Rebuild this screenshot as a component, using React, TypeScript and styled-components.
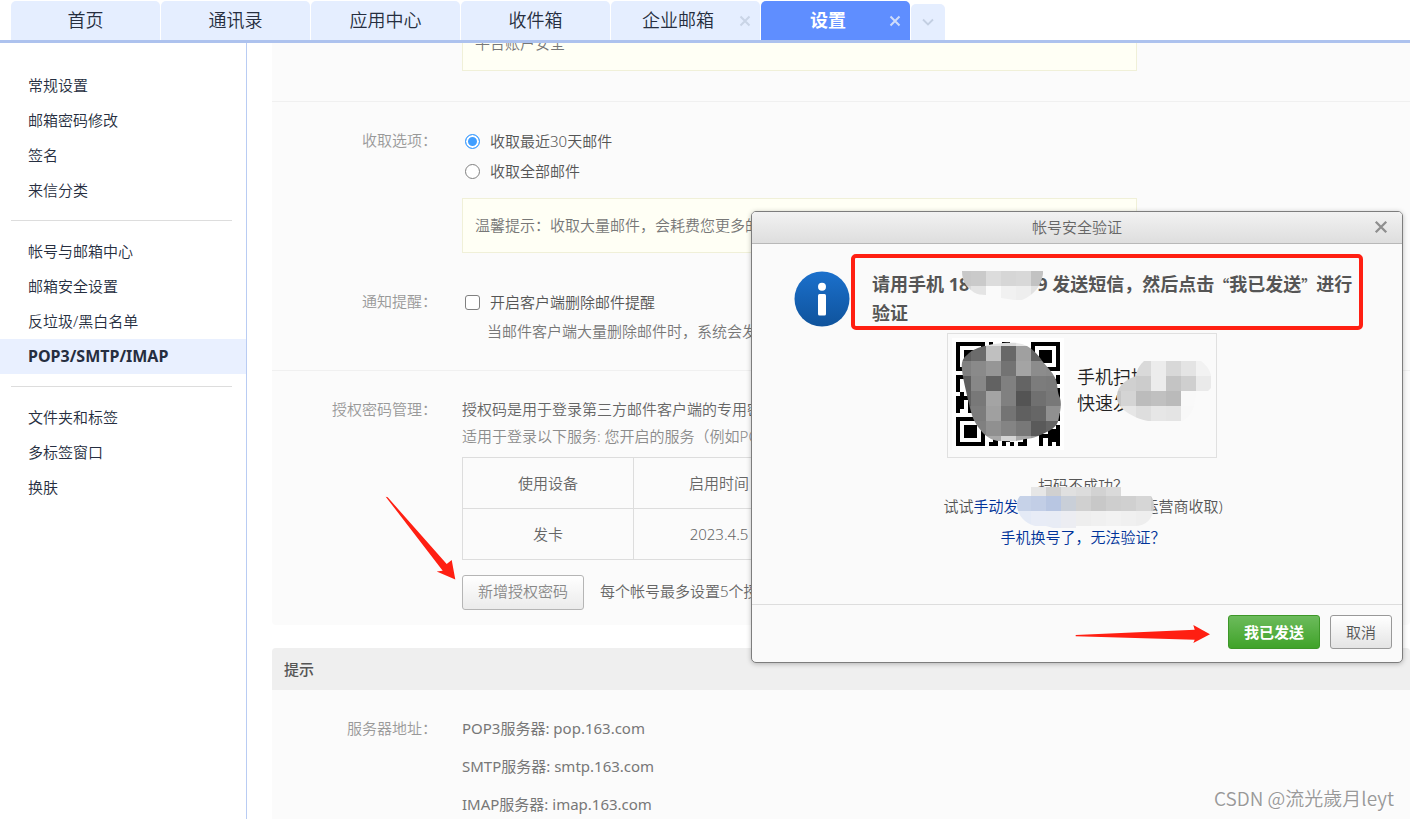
import React from "react";
import styled, { createGlobalStyle, css } from "styled-components";

const cjk = `"Noto Sans CJK SC", sans-serif`;
const sans = `"Noto Sans", ${cjk}`;

const GlobalStyle = createGlobalStyle`
  * { box-sizing: border-box; }
  body {
    margin: 0;
    background: #fff;
    color: #555;
    font-family: ${sans};
    font-size: 15px;
    font-weight: 350;
    line-height: 30px;
  }
  button, input { font: inherit; margin: 0; }
  a { text-decoration: none; color: #003399; }
  p, h1, h2 { margin: 0; font-weight: inherit; font-size: inherit; }
`;

const Page = styled.div`
  position: relative;
  display: flex;
  flex-direction: column;
  height: 100vh;
  overflow: hidden;
`;

/* ---------- top tabs ---------- */

const TabBar = styled.nav`
  display: flex;
  align-items: flex-end;
  gap: 1px;
  flex: none;
  padding: 1px 11px 0;
  border-bottom: 3px solid #adc2ee;
`;

const Tab = styled.div<{ $active?: boolean; $closable?: boolean }>`
  display: flex;
  align-items: center;
  width: 149px;
  height: 39px;
  padding: ${(p) => (p.$closable ? "0 9px 0 6px" : "0")};
  border-radius: 5px 5px 0 0;
  background: ${(p) => (p.$active ? "#5f8eff" : "#e5eeff")};
  color: ${(p) => (p.$active ? "#fff" : "#262e40")};
  font-weight: ${(p) => (p.$active ? 700 : "inherit")};
`;

const TabLink = styled.button`
  flex: 1;
  border: 0;
  padding: 0 0 2px;
  background: none;
  color: inherit;
  font-size: 18px;
`;

const CloseButton = styled.button<{ $color: string }>`
  display: flex;
  border: 0;
  padding: 0;
  background: none;
  color: ${(p) => p.$color};
`;

const MoreTabs = styled.button`
  display: flex;
  align-items: center;
  justify-content: center;
  width: 34px;
  height: 36px;
  border: 0;
  padding: 0;
  border-radius: 5px 5px 0 0;
  background: #e5eeff;
  color: #c3cfe2;
`;

/* ---------- sidebar ---------- */

const Body = styled.div`
  display: flex;
  flex: 1;
  min-height: 0;
`;

const Sidebar = styled.aside`
  flex: none;
  width: 247px;
  padding-top: 25px;
  border-right: 1px solid #b9ccf3;
`;

const MenuGroup = styled.ul`
  margin: 0;
  padding: 0;
  list-style: none;
`;

const Divider = styled.hr`
  height: 1px;
  margin: 12px 14px 13px 11px;
  border: 0;
  background: #ddd;
`;

const MenuLink = styled.a<{ $active?: boolean }>`
  display: block;
  padding-left: 28px;
  line-height: 35px;
  color: #262e40;
  ${(p) =>
    p.$active &&
    css`
      background: #e9f0ff;
      font-size: 16px;
      font-weight: 700;
    `}
`;

/* ---------- settings ---------- */

const Main = styled.main`
  flex: 1;
  min-width: 0;
  overflow: hidden;
  padding-left: 25px;
`;

const Panel = styled.section<{ $scrolled?: boolean }>`
  margin-top: ${(p) => (p.$scrolled ? -27 : 23)}px;
  border-radius: 4px;
  overflow: hidden;
  background: #fbfbfb;
`;

const PanelTitle = styled.h2`
  padding-left: 12px;
  line-height: 42px;
  background: #efefef;
  font-weight: 500;
`;

const Row = styled.div<{ $top: number; $bottom: number; $line?: boolean }>`
  display: grid;
  grid-template-columns: 165px minmax(0, 675px);
  column-gap: 25px;
  padding: ${(p) => p.$top}px 0 ${(p) => p.$bottom}px;
  border-bottom: ${(p) => (p.$line ? "1px solid #f0f0f0" : "0")};
`;

const RowLabel = styled.div<{ $leading?: number }>`
  text-align: right;
  line-height: ${(p) => p.$leading ?? 28}px;
  color: #999;
`;

const Note = styled.div<{ $gap?: number }>`
  margin-top: ${(p) => p.$gap ?? 0}px;
  padding: 15px 12px;
  border: 1px solid #f0f0d8;
  background: #fffff5;
  line-height: 23px;
  color: #777;
`;

const Choice = styled.label`
  display: flex;
  align-items: center;
  gap: 10px;
  padding-left: 3px;
`;

const Tick = styled.input`
  appearance: none;
  width: 15px;
  height: 15px;
  border: 1px solid #808080;
  border-radius: ${(p) => (p.type === "radio" ? "50%" : "3px")};
  background: #fff;
  &[type="radio"]:checked {
    border-color: #409eff;
    background: #409eff;
    box-shadow: inset 0 0 0 2px #fff;
  }
`;

const Hint = styled.p`
  padding-left: 25px;
  line-height: 28px;
  color: #777;
`;

const SubText = styled.p`
  line-height: 26px;
  color: #8c8c8c;
  white-space: nowrap;
`;

const Line = styled.p`
  line-height: 28px;
  color: #666;
  white-space: nowrap;
`;

const ServerLine = styled.p`
  line-height: 38px;
  font-weight: 400;
  color: #777;
`;

const DeviceTable = styled.table`
  margin-top: 8px;
  width: 343px;
  table-layout: fixed;
  border-collapse: collapse;
  color: #666;
  th, td {
    height: 51px;
    padding: 0;
    border: 1px solid #ddd;
    font-weight: inherit;
    text-align: center;
  }
`;

const AddLine = styled.div`
  position: relative;
  display: flex;
  gap: 16px;
  margin-top: 15px;
  line-height: 32px;
  white-space: nowrap;
  color: #666;
`;

const Button = styled.button<{ $kind?: "primary" | "muted" }>`
  height: 34px;
  padding: 0 15px;
  border: 1px solid #999;
  border-radius: 3px;
  background: linear-gradient(#fff, #e4e4e4);
  color: #555;
  line-height: 30px;
  ${(p) =>
    p.$kind === "muted" &&
    css`
      height: 35px;
      padding-bottom: 3px;
      border-color: #b5b5b5;
      background: linear-gradient(#fff, #ebebeb);
      color: #888;
    `}
  ${(p) =>
    p.$kind === "primary" &&
    css`
      border-color: #3d9728;
      background: linear-gradient(#6cbb5c, #40a329);
      color: #fff;
      font-weight: 700;
    `}
`;

/* ---------- dialog ---------- */

const Dialog = styled.div`
  position: absolute;
  top: 211px;
  right: 7px;
  width: 652px;
  border: 1px solid #7d7d7d;
  border-radius: 5px;
  background: #fafafa;
  box-shadow: 0 1px 5px rgba(0, 0, 0, 0.25);
`;

const DialogHeader = styled.header`
  display: flex;
  align-items: center;
  height: 32px;
  padding: 0 14px 2px 28px;
  border-bottom: 1px solid #b8b8b8;
  border-radius: 4px 4px 0 0;
  background: linear-gradient(#f2f2f2, #dedede);
  color: #666;
  h1 { flex: 1; text-align: center; }
`;

const DialogBody = styled.div`
  padding: 26px 42px 56px;
`;

const Message = styled.div`
  display: flex;
  align-items: center;
  gap: 22px;
`;

const MessageText = styled.p`
  flex: 1;
  color: #555;
  font-size: 18px;
  font-weight: 700;
  line-height: 29px;
`;

const Wide = styled.span`
  font-family: ${cjk};
  font-size: 15px;
`;

const Highlight = styled.div`
  position: absolute;
  top: 42px;
  left: 99px;
  width: 512px;
  height: 76px;
  border: 4px solid #ff1f12;
  border-radius: 5px;
`;

const Redacted = styled.span<{ $width: number }>`
  position: relative;
  display: inline-block;
  width: ${(p) => p.$width}px;
  height: 1px;
`;

const Mosaic = styled.svg<{ $left: number; $top: number }>`
  position: absolute;
  z-index: 1;
  left: ${(p) => p.$left}px;
  top: ${(p) => p.$top}px;
`;

const ScanCard = styled.div`
  position: relative;
  display: flex;
  align-items: flex-start;
  gap: 13px;
  width: 270px;
  height: 125px;
  margin: 5px auto 0;
  padding: 4px;
  border: 1px solid #e0e0e0;
`;

const ScanText = styled.p`
  padding-top: 26px;
  font-size: 18px;
  line-height: 26px;
  color: #222;
`;

const Center = styled.div`
  padding-left: 10px;
`;

const Help = styled.div`
  padding: 17px 0 0 2px;
  text-align: center;
  line-height: 21px;
  p + p + p { margin-top: 10px; }
`;

const DialogFooter = styled.footer`
  display: flex;
  justify-content: flex-end;
  gap: 10px;
  padding: 10px 10px 13px;
  border-top: 1px solid #ddd;
`;

const ButtonWrap = styled.div`
  position: relative;
  display: flex;
`;

const Arrow = styled.svg<{ $left: number; $top: number }>`
  position: absolute;
  left: ${(p) => p.$left}px;
  top: ${(p) => p.$top}px;
`;

const Watermark = styled.div`
  position: absolute;
  right: 16px;
  bottom: 6px;
  font-family: ${cjk};
  font-size: 19px;
  color: #999;
  text-shadow: 1px 1px 0 #fff;
`;

/* ---------- drawings ---------- */

const Cross = ({ size, weight }: { size: number; weight: number }) => (
  <svg width={size} height={size} viewBox="0 0 12 12" aria-hidden="true">
    <path d="M1.5 1.5 10.5 10.5M10.5 1.5 1.5 10.5" stroke="currentColor" strokeWidth={weight} fill="none" />
  </svg>
);

type Cell = [x: number, y: number, w: number, h: number, color: string];

const Cells = ({ cells }: { cells: Cell[] }) => (
  <>
    {cells.map(([x, y, w, h, fill], i) => (
      <rect key={i} x={x} y={y} width={w} height={h} fill={fill} />
    ))}
  </>
);

const phoneCells: Cell[] = [
  [0, 0, 9, 15, "#c8c8c8"], [9, 0, 15, 15, "#cacaca"], [24, 0, 15, 15, "#dcdcdc"],
  [39, 0, 15, 15, "#d6d6d6"], [54, 0, 15, 15, "#d8d8d8"], [69, 0, 12, 15, "#c2c2c2"],
  [0, 15, 9, 15, "#d8d8d8"], [9, 15, 15, 15, "#e4e4e4"], [24, 15, 15, 15, "#fafafa"],
  [39, 15, 15, 15, "#f1f1f1"], [54, 15, 15, 15, "#eeeeee"], [69, 15, 12, 15, "#e2e2e2"],
];

const scanCells: Cell[] = [
  [19, 0, 15, 15, "#d9d9d9"], [34, 0, 15, 30, "#ececec"], [49, 0, 15, 15, "#d8d8d8"],
  [64, 0, 15, 15, "#e4e4e4"], [79, 0, 15, 15, "#f2f2f2"], [0, 15, 19, 15, "#d0d0d0"],
  [19, 15, 15, 15, "#cccccc"], [49, 15, 15, 15, "#c4c4c4"], [64, 15, 15, 15, "#cfcfcf"],
  [79, 15, 15, 15, "#eaeaea"], [0, 30, 4, 15, "#c6c6c6"], [4, 30, 15, 15, "#d4d4d4"],
  [19, 30, 15, 15, "#bcbcbc"], [34, 30, 15, 15, "#c0c0c0"], [49, 30, 15, 15, "#bababa"],
  [64, 30, 15, 15, "#f9f9f9"], [0, 45, 19, 15, "#e6e6e6"], [19, 45, 15, 15, "#dedede"],
  [34, 45, 15, 15, "#e6e6e6"], [49, 45, 15, 15, "#e4e4e4"], [64, 45, 15, 15, "#f8f8f8"],
];

const smsCells: Cell[] = [
  [14, 0, 15, 9, "#e6e6e6"], [29, 0, 15, 9, "#d0d0d0"], [44, 0, 15, 9, "#e0e0e0"],
  [59, 0, 15, 9, "#dcdcdc"], [74, 0, 15, 9, "#d2d2d2"], [89, 0, 15, 9, "#dadada"],
  [0, 9, 14, 15, "#c6d2e8"], [14, 9, 15, 15, "#c2cee6"], [29, 9, 15, 15, "#b8c6e2"],
  [44, 9, 15, 15, "#c9cfd8"], [59, 9, 15, 15, "#d0d0d0"], [74, 9, 15, 15, "#c8c8c8"],
  [89, 9, 15, 15, "#cecece"], [104, 9, 15, 15, "#d0d0d0"], [119, 9, 15, 15, "#d6d6d6"],
  [134, 9, 3, 15, "#cccccc"],
  [0, 24, 14, 18, "#e4eaf6"], [14, 24, 15, 18, "#e8ecf6"], [29, 24, 15, 18, "#e8ecf5"],
  [44, 24, 15, 18, "#ecedf2"], [59, 24, 15, 18, "#eeeeee"], [74, 24, 15, 18, "#f0f0f0"],
  [89, 24, 15, 18, "#f2f2f2"], [104, 24, 15, 18, "#f0f0f0"], [119, 24, 18, 18, "#eeeeee"],
];

const qrShades = [
  ["#d8d8d8", "#d8d8d8", "#e4e4e4", "#dcdcdc", "#e8e8e8", "#e0e0e0", "#d8d8d8"],
  ["#5f5f5f", "#6c6c6c", "#c0c0c0", "#686868", "#a0a0a0", "#626262", "#888888"],
  ["#808080", "#8a8a8a", "#969696", "#737373", "#a4a4a4", "#8c8c8c", "#8a8a8a"],
  ["#5e5e5e", "#878787", "#626262", "#808080", "#646464", "#7c7c7c", "#7a7a7a"],
  ["#606060", "#787878", "#a4a4a4", "#808080", "#545454", "#707070", "#787878"],
  ["#707070", "#7c7c7c", "#a0a0a0", "#747474", "#606060", "#666666", "#909090"],
  ["#707070", "#808080", "#909090", "#848484", "#787878", "#5a5a5a", "#646464"],
  ["#a0a0a0", "#a0a0a0", "#a8a8a8", "#d4d4d4", "#a8a8a8", "#989898", "#707070"],
];

const qrModules = [
  "1111111010011000001111111",
  "1000001001001100001000001",
  "1011101010110010101011101",
  "1011101001011010101011101",
  "1011101011010110001011101",
  "1000001010101010101000001",
  "1111111010101010101111111",
  "0000000011001010100000000",
  "1110101011010110110101101",
  "1001010101011010011010011",
  "1000101011010110101100100",
  "1000010101010101101011011",
  "0101101010110101100110111",
  "1110110101101010101010101",
  "1101001010110101011010110",
  "1101101101010110101101001",
  "1001010101011010110100110",
  "0000000010101101100010001",
  "1111111010110101101010111",
  "1000001011010110100010000",
  "1011101001011010111111001",
  "1011101010101101101100111",
  "1011101001110010100011111",
  "1000001001011000100010111",
  "1111111011010101100010101",
];

const QrCode = () => (
  <svg width="112" height="112" viewBox="0 0 112 112" role="img" aria-label="二维码">
    <defs>
      <clipPath id="qr-blob">
        <path d="M10 32C9 24 11 20 15 17C20 11 30 8 42 6C58 4 68 4 75 8C82 12 87 18 91 24C97 31 102 36 104 42C106 48 105 54 108 60C110 66 108 74 107 79C106 87 102 90 97 93C88 97 82 101 73 101C64 104 56 103 46 103C40 102 37 100 32 96C27 90 24 87 21 80C19 74 18 70 16 62C14 52 11 42 10 32Z" />
      </clipPath>
    </defs>
    <rect width="112" height="112" fill="#fff" />
    <g transform="translate(4 4) scale(4.16)" shapeRendering="crispEdges">
      {qrModules.flatMap((row, y) =>
        [...row].map((bit, x) => (bit === "1" ? <rect key={`${x}-${y}`} x={x} y={y} width="1" height="1" /> : null))
      )}
    </g>
    <g clipPath="url(#qr-blob)">
      {qrShades.flatMap((row, y) =>
        row.map((fill, x) => (
          <rect key={`${x}-${y}`} x={4 + x * 15} y={y * 15 - 7} width="15" height="15" fill={fill} />
        ))
      )}
    </g>
  </svg>
);

const InfoIcon = () => (
  <svg width="56" height="56" viewBox="0 0 56 56" aria-hidden="true">
    <defs>
      <linearGradient id="info-fill" x1="0" y1="0" x2="0" y2="1">
        <stop offset="0" stopColor="#1b70cc" />
        <stop offset="1" stopColor="#0f539c" />
      </linearGradient>
    </defs>
    <circle cx="28" cy="28" r="27.5" fill="url(#info-fill)" />
    <circle cx="28" cy="15.7" r="4" fill="#fff" />
    <rect x="24" y="23" width="8" height="21.5" rx="1.5" fill="#fff" />
  </svg>
);

/* ---------- data ---------- */

const tabs = [
  { label: "首页" },
  { label: "通讯录" },
  { label: "应用中心" },
  { label: "收件箱" },
  { label: "企业邮箱", closable: true },
  { label: "设置", closable: true, active: true },
];

const menu = [
  ["常规设置", "邮箱密码修改", "签名", "来信分类"],
  ["帐号与邮箱中心", "邮箱安全设置", "反垃圾/黑白名单", "POP3/SMTP/IMAP"],
  ["文件夹和标签", "多标签窗口", "换肤"],
];

export default function App() {
  return (
    <Page lang="zh-CN">
      <GlobalStyle />
      <TabBar>
        {tabs.map((t) => (
          <Tab key={t.label} $active={t.active} $closable={t.closable}>
            <TabLink type="button">{t.label}</TabLink>
            {t.closable && (
              <CloseButton type="button" aria-label="关闭" $color={t.active ? "#cfdcfa" : "#c9d4e6"}>
                <Cross size={12} weight={2} />
              </CloseButton>
            )}
          </Tab>
        ))}
        <MoreTabs type="button" aria-label="更多">
          <svg width="12" height="8" viewBox="0 0 12 8" aria-hidden="true">
            <path d="M1 1.5 6 6.5 11 1.5" stroke="currentColor" strokeWidth="1.8" fill="none" />
          </svg>
        </MoreTabs>
      </TabBar>

      <Body>
        <Sidebar>
          {menu.map((group, i) => (
            <React.Fragment key={i}>
              {i > 0 && <Divider />}
              <MenuGroup>
                {group.map((item) => (
                  <li key={item}>
                    <MenuLink href="#" $active={item === "POP3/SMTP/IMAP"}>
                      {item}
                    </MenuLink>
                  </li>
                ))}
              </MenuGroup>
            </React.Fragment>
          ))}
        </Sidebar>

        <Main>
          <Panel $scrolled>
            <Row $top={0} $bottom={30} $line>
              <span />
              <Note>平台账户安全</Note>
            </Row>
            <Row $top={24} $bottom={34}>
              <RowLabel>收取选项：</RowLabel>
              <div>
                <Choice>
                  <Tick type="radio" name="range" defaultChecked />
                  收取最近30天邮件
                </Choice>
                <Choice>
                  <Tick type="radio" name="range" />
                  收取全部邮件
                </Choice>
                <Note $gap={12}>温馨提示：收取大量邮件，会耗费您更多的</Note>
              </div>
            </Row>
            <Row $top={0} $bottom={25} $line>
              <RowLabel>通知提醒：</RowLabel>
              <div>
                <Choice>
                  <Tick type="checkbox" />
                  开启客户端删除邮件提醒
                </Choice>
                <Hint>当邮件客户端大量删除邮件时，系统会发送</Hint>
              </div>
            </Row>
            <Row $top={24} $bottom={15}>
              <RowLabel>授权密码管理：</RowLabel>
              <div>
                <Line>授权码是用于登录第三方邮件客户端的专用密码</Line>
                <SubText>适用于登录以下服务: 您开启的服务（例如POP3）</SubText>
                <DeviceTable>
                  <thead>
                    <tr>
                      <th scope="col">使用设备</th>
                      <th scope="col">启用时间</th>
                    </tr>
                  </thead>
                  <tbody>
                    <tr>
                      <td>发卡</td>
                      <td>2023.4.5</td>
                    </tr>
                  </tbody>
                </DeviceTable>
                <AddLine>
                  <Button type="button" $kind="muted">新增授权密码</Button>
                  <span>每个帐号最多设置5个授权</span>
                  <Arrow $left={-77} $top={-79} width="72" height="85" viewBox="0 0 72 85" aria-hidden="true">
                    <path d="M.7.7 2.7 1.3 61.7 68 66.7 64 70.3 83.5 51.7 75.5 57.7 74.7Z" fill="#ff1f12" />
                  </Arrow>
                </AddLine>
              </div>
            </Row>
          </Panel>

          <Panel>
            <PanelTitle>提示</PanelTitle>
            <Row $top={19} $bottom={20}>
              <RowLabel $leading={38}>服务器地址：</RowLabel>
              <div>
                <ServerLine>POP3服务器: pop.163.com</ServerLine>
                <ServerLine>SMTP服务器: smtp.163.com</ServerLine>
                <ServerLine>IMAP服务器: imap.163.com</ServerLine>
              </div>
            </Row>
          </Panel>
        </Main>
      </Body>

      <Dialog role="dialog" aria-labelledby="dialog-title">
        <DialogHeader>
          <h1 id="dialog-title">帐号安全验证</h1>
          <CloseButton type="button" aria-label="关闭" $color="#8f8f8f">
            <Cross size={14} weight={2} />
          </CloseButton>
        </DialogHeader>
        <DialogBody>
          <Message>
            <InfoIcon />
            <MessageText>
              请用手机 18
              <Redacted $width={68}>
                <Mosaic $left={-7} $top={-19} width="81" height="29" viewBox="0 0 81 29" aria-hidden="true">
                  <clipPath id="phone-blob">
                    <path d="M0 0H81V3C79 15 72 24 60 29H52C48 28 44 28 39 27V15H24V24C14 24 10 21 4 14C1 10 0 5 0 0Z" />
                  </clipPath>
                  <g clipPath="url(#phone-blob)">
                    <Cells cells={phoneCells} />
                  </g>
                </Mosaic>
              </Redacted>
              9 发送短信，然后点击<Wide>“</Wide>我已发送<Wide>”</Wide>进行验证
            </MessageText>
          </Message>
          <Center>
            <ScanCard>
              <QrCode />
              <ScanText>
                手机扫描
                <br />
                快速发
              </ScanText>
              <Mosaic $left={169} $top={27} width="94" height="60" viewBox="0 0 94 60" aria-hidden="true">
                <clipPath id="scan-blob">
                  <path d="M27 0H84Q92 6 94 14V27L91 30H79C79 42 76 54 66 60H31C20 58 2 50 0 38C-1 28 5 20 19 15Q20 6 27 0Z" />
                </clipPath>
                <g clipPath="url(#scan-blob)">
                  <Cells cells={scanCells} />
                </g>
              </Mosaic>
            </ScanCard>
            <Help>
              <p>扫码不成功？</p>
              <p>
                试试<a href="#">手动发</a>
                <Redacted $width={125}>
                  <Mosaic $left={-1} $top={-24} width="137" height="42" viewBox="0 0 137 42" aria-hidden="true">
                    <clipPath id="sms-blob">
                      <path d="M14 0H104V9H134Q137 13 137 20C136 32 129 39 118 39H59V41H36L29 39H18C6 36 0 26 0 18Q0 12 3 9H14Z" />
                    </clipPath>
                    <g clipPath="url(#sms-blob)">
                      <Cells cells={smsCells} />
                    </g>
                  </Mosaic>
                </Redacted>
                运营商收取)
              </p>
              <p>
                <a href="#">手机换号了，无法验证？</a>
              </p>
            </Help>
          </Center>
        </DialogBody>
        <DialogFooter>
          <ButtonWrap>
            <Button type="button" $kind="primary">我已发送</Button>
            <Arrow $left={-153} $top={9} width="136" height="20" viewBox="0 0 136 20" aria-hidden="true">
              <path d="M.7 11 119.7 5.7 118.3 1 135 10.3 118.3 19 119.7 15.7.7 12.3Z" fill="#ff1f12" />
            </Arrow>
          </ButtonWrap>
          <Button type="button">取消</Button>
        </DialogFooter>
        <Highlight />
      </Dialog>

      <Watermark>CSDN @流光歲月leyt</Watermark>
    </Page>
  );
}
